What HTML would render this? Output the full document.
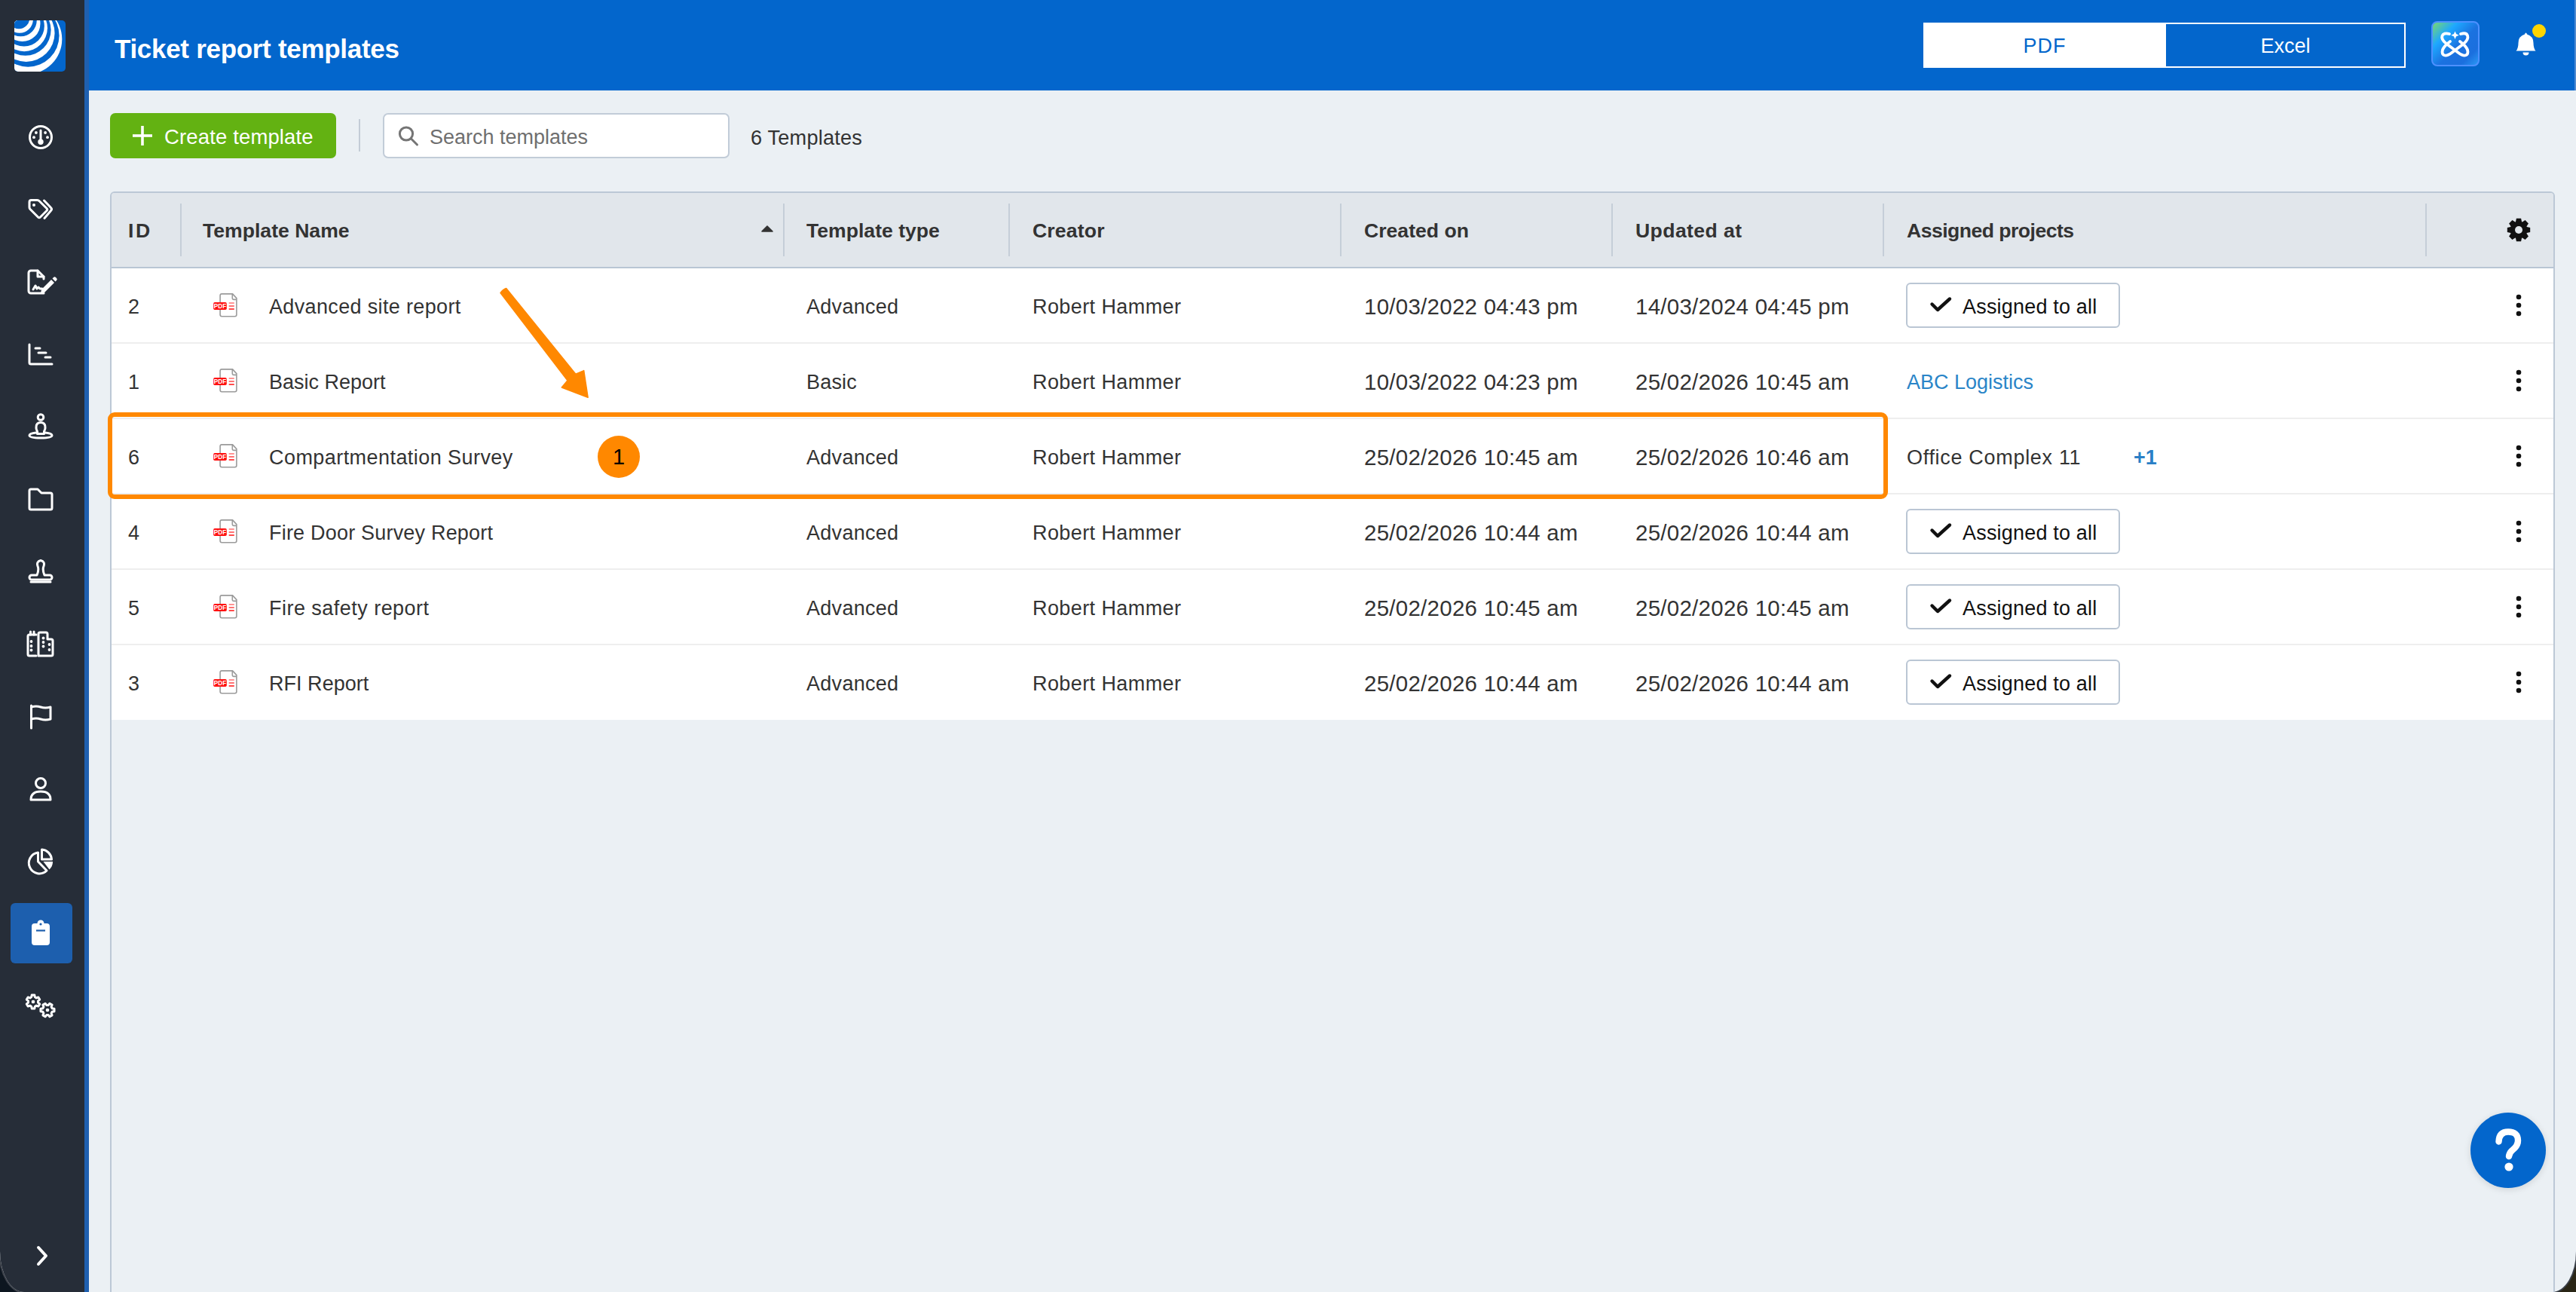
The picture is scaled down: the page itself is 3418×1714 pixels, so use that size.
<!DOCTYPE html><html><head><meta charset="utf-8"><style>
*{margin:0;padding:0;box-sizing:border-box}
html,body{width:3418px;height:1714px;overflow:hidden;background:linear-gradient(90deg,#0d1620 50%,#2a2616 50%)}
body{font-family:"Liberation Sans",sans-serif;color:#333333;position:relative}
.a{position:absolute}
.t{position:absolute;white-space:nowrap;line-height:104px;height:100px;font-size:27px}
.hd{position:absolute;white-space:nowrap;line-height:102px;height:100px;font-size:26.6px;font-weight:bold;color:#333}
svg{position:absolute;overflow:visible}
</style></head><body><div class="a" style="left:0;top:0;width:3418px;height:1714px;background:#ebf0f4;border-radius:0 0 32px 32px / 0 0 54px 54px;overflow:hidden;box-shadow:0 0 0 2px #3a3f48">
<div class="a" style="left:0;top:0;width:112px;height:1714px;background:#262d38"></div>
<div class="a" style="left:112px;top:0;width:6px;height:1714px;background:#1f60b0"></div>
<div class="a" style="left:118px;top:0;width:3300px;height:120px;background:#0366cc"></div>
<div class="a" style="left:3416px;top:0;width:2px;height:120px;background:#4f8ad0"></div>
<svg style="left:19px;top:27px" width="68" height="68" viewBox="0 0 68 68">
<defs><clipPath id="lc"><rect x="0" y="0" width="68" height="68" rx="5"/></clipPath></defs>
<g clip-path="url(#lc)">
<rect width="68" height="68" fill="#0366cc"/>
<circle cx="16.84" cy="24.99" r="46.45" fill="#fff"/>
<circle cx="18.21" cy="20.34" r="41.34" fill="#0366cc"/>
<circle cx="15.7" cy="17.08" r="37.85" fill="#fff"/>
<circle cx="14.68" cy="12.86" r="33.94" fill="#0366cc"/>
<circle cx="13.11" cy="10.29" r="30.84" fill="#fff"/>
<circle cx="12.86" cy="7.47" r="26.99" fill="#0366cc"/>
<circle cx="10.64" cy="4.26" r="23.85" fill="#fff"/>
<circle cx="8.47" cy="-0.07" r="21.33" fill="#0366cc"/>
<circle cx="7" cy="-1" r="17.83" fill="#fff"/>
<circle cx="6" cy="-3" r="14.3" fill="#0366cc"/>
</g></svg>
<svg style="left:0;top:0" width="112" height="1714">
<g fill="none" stroke="#fff" stroke-width="3" stroke-linecap="round" stroke-linejoin="round">
<circle cx="54" cy="182" r="14.5"/>
<line x1="54" y1="173" x2="54" y2="186"/>
</g>
<g fill="#fff"><circle cx="54" cy="188.2" r="3.7"/><circle cx="47.9" cy="176" r="1.9"/><circle cx="60.1" cy="176" r="1.9"/><circle cx="45" cy="182.2" r="1.9"/><circle cx="63" cy="182.2" r="1.9"/></g>
<!-- tags 278 -->
<g fill="none" stroke="#fff" stroke-width="3" stroke-linecap="round" stroke-linejoin="round">
<path d="M41.5 265.5 H49.5 Q51 265.5 52.5 267 L62 276.5 Q63.5 278 62 279.5 L53.5 288 Q52 289.5 50.5 288 L40 277.5 Q39 276.5 39 275 V268 Q39 265.5 41.5 265.5 Z"/>
<path d="M58.5 266 L67.5 275.5 Q69.5 277.5 67.5 279.5 L59 289.5"/>
</g>
<circle cx="45" cy="272" r="2" fill="#fff"/>
<!-- signature doc 374 -->
<g fill="none" stroke="#fff" stroke-width="3" stroke-linecap="round" stroke-linejoin="round">
<path d="M58 389 H41 a3 3 0 0 1 -3 -3 V362 a3 3 0 0 1 3 -3 H50 L58 367 V370"/>
<path d="M50 359 V367 H58"/>
<path d="M44 384 l3 -5 l2 4 l2 -2 l2 2 h3"/>
</g>
<path d="M55 384 L68 371 L72 375 L59 388 L54 389 Z M69.5 369.5 L71 368 a2 2 0 0 1 3 0 l1 1 a2 2 0 0 1 0 3 L73.5 373.5 Z" fill="#fff"/>
</svg>
<svg style="left:0;top:0" width="112" height="1714">
<g fill="none" stroke="#fff" stroke-width="3" stroke-linecap="round" stroke-linejoin="round">
<!-- reports 470 -->
<path d="M39 457 V481 a2 2 0 0 0 2 2 H69"/>
<line x1="47" y1="462" x2="53" y2="462"/>
<line x1="51" y1="468" x2="61" y2="468"/>
<line x1="60" y1="474" x2="67" y2="474"/>
<!-- location person 566 -->
<circle cx="54" cy="553.5" r="3.8"/>
<path d="M49.5 572.5 Q47.5 569 48 566 Q48.5 560.5 54 560.5 Q59.5 560.5 60 566 Q60.5 569 58.5 572.5 V575.5 H49.5 Z"/>
<path d="M48 574 Q39 575 39 577.5 Q39 581 54 581 Q69 581 69 577.5 Q69 575 60 574"/>
<!-- folder 662 -->
<path d="M41 649 H50 L55 654 H67 a2 2 0 0 1 2 2 V674 a2 2 0 0 1 -2 2 H41 a2 2 0 0 1 -2 -2 V651 a2 2 0 0 1 2 -2 Z"/>
<!-- stamp 758 -->
<path d="M49 763 Q52 756 50 751 Q48 745 54 743.5 Q60 745 58 751 Q56 756 59 763 H66 a3 3 0 0 1 0 6 H42 a3 3 0 0 1 0 -6 Z"/>
<line x1="41" y1="772" x2="67" y2="772"/>
<!-- buildings 854 -->
<path d="M48 870 H39 a2 2 0 0 1 -2 -2 V844 a2 2 0 0 1 2 -2 H48"/>
<line x1="40.5" y1="842" x2="40.5" y2="838"/>
<line x1="45" y1="842" x2="45" y2="838"/>
<path d="M51 870 V841 a2 2 0 0 1 2 -2 H61 a2 2 0 0 1 2 2 V848 H68 a2 2 0 0 1 2 2 V868 a2 2 0 0 1 -2 2 Z"/>
<!-- flag 950 -->
<line x1="41.5" y1="936" x2="41.5" y2="966"/>
<path d="M41.5 938 Q48 936 54 938 Q60 940 67 938 V954 Q60 956 54 954 Q48 952 41.5 954"/>
<!-- person 1047 -->
<circle cx="54" cy="1039" r="6.5"/>
<path d="M41 1061 Q41 1050 54 1050 Q67 1050 67 1061 Z"/>
<!-- pie 1142 -->
<path d="M50.5 1131 A14 14 0 1 0 62 1155 L50.5 1143 Z"/>
<path d="M55.5 1127 A14 14 0 0 1 68.5 1140 H55.5 Z"/>
<!-- gears 1334 -->
</g>
</svg>
<svg style="left:0;top:0" width="112" height="1714"><g fill="#fff">
<circle cx="41.5" cy="851" r="1.9"/><circle cx="41.5" cy="857" r="1.9"/><circle cx="41.5" cy="862.5" r="1.9"/>
<circle cx="57.5" cy="846.5" r="1.9"/><circle cx="57.5" cy="852" r="1.9"/><circle cx="57.5" cy="857.5" r="1.9"/>
<circle cx="65.5" cy="855" r="1.9"/><circle cx="65.5" cy="862" r="1.9"/>
<path d="M57.5 1143 H70 A14 14 0 0 1 65.5 1153.5 Z"/>
</g></svg>
<div class="a" style="left:14px;top:1198px;width:82px;height:80px;background:#1d5fae;border-radius:6px"></div>
<svg style="left:0;top:0" width="112" height="1714">
<path d="M42 1229 a4 4 0 0 1 4 -4 H49.5 a4.5 4.5 0 0 1 9 0 H62 a4 4 0 0 1 4 4 V1250 a4 4 0 0 1 -4 4 H46 a4 4 0 0 1 -4 -4 Z" fill="#fff"/>
<circle cx="54" cy="1226" r="1.6" fill="#1d5fae"/>
<line x1="48" y1="1234.5" x2="60" y2="1234.5" stroke="#1d5fae" stroke-width="2.2"/>
</svg>
<svg style="left:0;top:0" width="112" height="1714"><g fill="none" stroke="#fff" stroke-width="3" stroke-linecap="round" stroke-linejoin="round" stroke-width="1.85">
<path d="M41.67 1322.82 L42.17 1319.98 L45.83 1319.98 L46.32 1322.82 L48.19 1323.90 L50.89 1322.91 L52.72 1326.07 L50.51 1327.93 L50.51 1330.07 L52.72 1331.93 L50.89 1335.09 L48.19 1334.10 L46.33 1335.18 L45.83 1338.02 L42.17 1338.02 L41.68 1335.18 L39.81 1334.10 L37.11 1335.09 L35.28 1331.93 L37.49 1330.07 L37.49 1327.93 L35.28 1326.07 L37.11 1322.91 L39.81 1323.90 Z"/>
<path d="M69.18 1337.67 L72.02 1338.17 L72.02 1341.83 L69.18 1342.33 L68.10 1344.19 L69.09 1346.89 L65.93 1348.72 L64.07 1346.51 L61.93 1346.51 L60.07 1348.72 L56.91 1346.89 L57.90 1344.19 L56.82 1342.33 L53.98 1341.83 L53.98 1338.17 L56.82 1337.67 L57.90 1335.81 L56.91 1333.11 L60.07 1331.28 L61.93 1333.49 L64.07 1333.49 L65.93 1331.28 L69.09 1333.11 L68.10 1335.81 Z"/>
</g><circle cx="44" cy="1329" r="2.3" fill="#fff"/><circle cx="63" cy="1340" r="2.3" fill="#fff"/>
<path d="M51 1655 L61 1666 L51 1677" fill="none" stroke="#fff" stroke-width="4" stroke-linecap="round" stroke-linejoin="round"/>
</svg>
<div class="a" style="left:152px;top:0;height:120px;line-height:130px;font-size:35px;letter-spacing:-0.30px;font-weight:bold;color:#fff;white-space:nowrap">Ticket report templates</div>
<div class="a" style="left:2552px;top:30px;width:640px;height:60px;border:2px solid #fff;background:#0366cc"></div>
<div class="a" style="left:2552px;top:30px;width:322px;height:60px;background:#fff"></div>
<div class="a" style="left:2552px;top:30px;width:322px;height:60px;line-height:62px;text-align:center;font-size:27px;letter-spacing:1px;color:#0366cc">PDF</div>
<div class="a" style="left:2874px;top:30px;width:317px;height:60px;line-height:62px;text-align:center;font-size:27px;color:#fff">Excel</div>
<div class="a" style="left:3226px;top:28px;width:64px;height:60px;border-radius:8px;border:2px solid #4e90ff;background:linear-gradient(135deg,#7ad86f 0%,#1ea8ff 28%,#1b72e0 55%,#1b6fde 80%,#2a98f5 100%)"></div>
<svg style="left:3226px;top:28px" width="64" height="60">
<g fill="none" stroke="#fff" stroke-width="3.8" stroke-linecap="round">
<path d="M24 17 C 14 14, 10 22, 20 30 L 36 42 C 44 48, 50 46, 48 38 C 46 33, 42 30, 38 27"/>
<path d="M39 17 C 49 14, 52 22, 43 30 L 27 42 C 19 48, 13 46, 15 38 C 17 33, 21 30, 25 27"/>
</g>
<path d="M31.5 13.5 l1.6 3.6 l3.6 1.6 l-3.6 1.6 l-1.6 3.6 l-1.6 -3.6 l-3.6 -1.6 l3.6 -1.6 Z" fill="#fff"/>
</svg>
<svg style="left:3330px;top:38px" width="50" height="40">
<path d="M8.5 29.5 Q11.5 26 11.5 19 Q11.5 10 20 7.5 Q20.5 5.5 21.5 5.5 Q22.5 5.5 23 7.5 Q31.5 10 31.5 19 Q31.5 26 34.5 29.5 Z" fill="#fff"/>
<path d="M17.5 31.5 Q17.5 35.5 21.5 35.5 Q25.5 35.5 25.5 31.5 Z" fill="#fff"/>
<circle cx="39" cy="3" r="9" fill="#ffd500"/>
</svg>
<div class="a" style="left:146px;top:150px;width:300px;height:60px;background:#63b212;border-radius:7px"></div>
<svg style="left:146px;top:150px" width="300" height="60"><g stroke="#fff" stroke-width="3.6"><line x1="30" y1="30" x2="56" y2="30"/><line x1="43" y1="17" x2="43" y2="43"/></g></svg>
<div class="a" style="left:218px;top:150px;height:60px;line-height:64px;font-size:27.5px;letter-spacing:0.14px;color:#fff;white-space:nowrap">Create template</div>
<div class="a" style="left:476px;top:158px;width:2px;height:43px;background:#c3ccd6"></div>
<div class="a" style="left:508px;top:150px;width:460px;height:60px;background:#fff;border:2px solid #c2ccd8;border-radius:7px"></div>
<svg style="left:508px;top:150px" width="80" height="59"><g fill="none" stroke="#757575" stroke-width="3" stroke-linecap="round"><circle cx="31" cy="27.5" r="8.6"/><line x1="37.5" y1="34" x2="45.5" y2="42"/></g></svg>
<div class="a" style="left:570px;top:150px;height:60px;line-height:64px;font-size:27px;color:#6f6f6f;white-space:nowrap">Search templates</div>
<div class="a" style="left:996px;top:150px;height:60px;line-height:65px;font-size:27.2px;letter-spacing:0.17px;color:#333;white-space:nowrap">6 Templates</div>
<div class="a" style="left:146px;top:254px;width:3244px;height:1600px;border:2px solid #bcc8d6;border-radius:6px 6px 0 0;background:#ebf0f4"></div>
<div class="a" style="left:148px;top:256px;width:3240px;height:99px;background:#e1e6eb;border-radius:4px 4px 0 0"></div>
<div class="a" style="left:148px;top:354px;width:3240px;height:2px;background:#b9c6d4"></div>
<div class="a" style="left:239px;top:270px;width:2px;height:70px;background:#c5ced8"></div>
<div class="a" style="left:1039px;top:270px;width:2px;height:70px;background:#c5ced8"></div>
<div class="a" style="left:1338px;top:270px;width:2px;height:70px;background:#c5ced8"></div>
<div class="a" style="left:1778px;top:270px;width:2px;height:70px;background:#c5ced8"></div>
<div class="a" style="left:2138px;top:270px;width:2px;height:70px;background:#c5ced8"></div>
<div class="a" style="left:2498px;top:270px;width:2px;height:70px;background:#c5ced8"></div>
<div class="a" style="left:3218px;top:270px;width:2px;height:70px;background:#c5ced8"></div>
<div class="hd" style="left:170px;top:255px;letter-spacing:2.5px">ID</div>
<div class="hd" style="left:269px;top:255px;">Template Name</div>
<div class="hd" style="left:1070px;top:255px;">Template type</div>
<div class="hd" style="left:1370px;top:255px;letter-spacing:0.15px">Creator</div>
<div class="hd" style="left:1810px;top:255px;">Created on</div>
<div class="hd" style="left:2170px;top:255px;letter-spacing:0.4px">Updated at</div>
<div class="hd" style="left:2530px;top:255px;letter-spacing:-0.53px">Assigned projects</div>
<svg style="left:1008px;top:298px" width="20" height="12"><path d="M3 9 L10 2 L17 9 Z" fill="#333" stroke="#333" stroke-width="1.6" stroke-linejoin="round"/></svg>
<svg style="left:3326px;top:289px" width="32" height="32"><path d="M26.76 11.95 L31.19 12.92 L31.19 19.08 L26.76 20.05 L26.48 20.75 L28.92 24.56 L24.56 28.92 L20.75 26.48 L20.05 26.76 L19.08 31.19 L12.92 31.19 L11.95 26.76 L11.25 26.48 L7.44 28.92 L3.08 24.56 L5.52 20.75 L5.24 20.05 L0.81 19.08 L0.81 12.92 L5.24 11.95 L5.52 11.25 L3.08 7.44 L7.44 3.08 L11.25 5.52 L11.95 5.24 L12.92 0.81 L19.08 0.81 L20.05 5.24 L20.75 5.52 L24.56 3.08 L28.92 7.44 L26.48 11.25 Z" fill="#111"/><circle cx="16" cy="16" r="5" fill="#e1e6eb"/></svg>
<div class="a" style="left:148px;top:356px;width:3240px;height:99px;background:#fff"></div>
<div class="a" style="left:148px;top:454px;width:3240px;height:2px;background:#eeeeee"></div>
<div class="t" style="left:170px;top:355px">2</div>
<svg style="left:280px;top:387px" width="40" height="36">
<path d="M14.3 2.9 H28.6 L33.9 8.6 V30.6 a2.2 2.2 0 0 1 -2.2 2.2 H14.3 a2.2 2.2 0 0 1 -2.2 -2.2 V5.1 a2.2 2.2 0 0 1 2.2 -2.2 Z" fill="#fff" stroke="#9b9b9b" stroke-width="1.6"/>
<path d="M28.3 3 V8.6 a1.8 1.8 0 0 0 1.8 1.8 H33.9" fill="none" stroke="#9b9b9b" stroke-width="1.6"/>
<rect x="3.2" y="14.1" width="17.6" height="9.9" rx="1.8" fill="#ff1010"/>
<text x="12" y="22.2" font-family="Liberation Sans" font-weight="bold" font-size="8.2" fill="#fff" text-anchor="middle">PDF</text>
<g stroke-width="1.5"><line x1="23.7" y1="15" x2="30.8" y2="15" stroke="#ff7070"/><line x1="23.7" y1="19" x2="30.8" y2="19" stroke="#ff4545"/><line x1="23.7" y1="23" x2="30.8" y2="23" stroke="#ff1010"/></g>
</svg>
<div class="t" style="left:357px;top:355px;letter-spacing:0.35px">Advanced site report</div>
<div class="t" style="left:1070px;top:355px;letter-spacing:0.29px">Advanced</div>
<div class="t" style="left:1370px;top:355px;letter-spacing:0.41px">Robert Hammer</div>
<div class="t" style="left:1810px;top:355px;font-size:29.5px;letter-spacing:0.26px">10/03/2022 04:43 pm</div>
<div class="t" style="left:2170px;top:355px;font-size:29.5px;letter-spacing:0.26px">14/03/2024 04:45 pm</div>
<div class="a" style="left:2529px;top:375px;width:284px;height:60px;border:2px solid #bac6d4;border-radius:6px;background:#fff"></div>
<svg style="left:2558px;top:393px" width="34" height="24"><path d="M5.5 10.5 L13 18 L29 3.5" fill="none" stroke="#111" stroke-width="4.4" stroke-linecap="round" stroke-linejoin="round"/></svg>
<div class="t" style="left:2604px;top:355px;color:#111;letter-spacing:0.19px">Assigned to all</div>
<svg style="left:3336px;top:390px" width="12" height="30"><g fill="#111"><circle cx="6" cy="4" r="3.3"/><circle cx="6" cy="15" r="3.3"/><circle cx="6" cy="26" r="3.3"/></g></svg>
<div class="a" style="left:148px;top:456px;width:3240px;height:99px;background:#fff"></div>
<div class="a" style="left:148px;top:554px;width:3240px;height:2px;background:#eeeeee"></div>
<div class="t" style="left:170px;top:455px">1</div>
<svg style="left:280px;top:487px" width="40" height="36">
<path d="M14.3 2.9 H28.6 L33.9 8.6 V30.6 a2.2 2.2 0 0 1 -2.2 2.2 H14.3 a2.2 2.2 0 0 1 -2.2 -2.2 V5.1 a2.2 2.2 0 0 1 2.2 -2.2 Z" fill="#fff" stroke="#9b9b9b" stroke-width="1.6"/>
<path d="M28.3 3 V8.6 a1.8 1.8 0 0 0 1.8 1.8 H33.9" fill="none" stroke="#9b9b9b" stroke-width="1.6"/>
<rect x="3.2" y="14.1" width="17.6" height="9.9" rx="1.8" fill="#ff1010"/>
<text x="12" y="22.2" font-family="Liberation Sans" font-weight="bold" font-size="8.2" fill="#fff" text-anchor="middle">PDF</text>
<g stroke-width="1.5"><line x1="23.7" y1="15" x2="30.8" y2="15" stroke="#ff7070"/><line x1="23.7" y1="19" x2="30.8" y2="19" stroke="#ff4545"/><line x1="23.7" y1="23" x2="30.8" y2="23" stroke="#ff1010"/></g>
</svg>
<div class="t" style="left:357px;top:455px;letter-spacing:0px">Basic Report</div>
<div class="t" style="left:1070px;top:455px;letter-spacing:0.2px">Basic</div>
<div class="t" style="left:1370px;top:455px;letter-spacing:0.41px">Robert Hammer</div>
<div class="t" style="left:1810px;top:455px;font-size:29.5px;letter-spacing:0.26px">10/03/2022 04:23 pm</div>
<div class="t" style="left:2170px;top:455px;font-size:29.5px;letter-spacing:0.26px">25/02/2026 10:45 am</div>
<div class="t" style="left:2530px;top:455px;color:#2a85c8">ABC Logistics</div>
<svg style="left:3336px;top:490px" width="12" height="30"><g fill="#111"><circle cx="6" cy="4" r="3.3"/><circle cx="6" cy="15" r="3.3"/><circle cx="6" cy="26" r="3.3"/></g></svg>
<div class="a" style="left:148px;top:556px;width:3240px;height:99px;background:#fff"></div>
<div class="a" style="left:148px;top:654px;width:3240px;height:2px;background:#eeeeee"></div>
<div class="t" style="left:170px;top:555px">6</div>
<svg style="left:280px;top:587px" width="40" height="36">
<path d="M14.3 2.9 H28.6 L33.9 8.6 V30.6 a2.2 2.2 0 0 1 -2.2 2.2 H14.3 a2.2 2.2 0 0 1 -2.2 -2.2 V5.1 a2.2 2.2 0 0 1 2.2 -2.2 Z" fill="#fff" stroke="#9b9b9b" stroke-width="1.6"/>
<path d="M28.3 3 V8.6 a1.8 1.8 0 0 0 1.8 1.8 H33.9" fill="none" stroke="#9b9b9b" stroke-width="1.6"/>
<rect x="3.2" y="14.1" width="17.6" height="9.9" rx="1.8" fill="#ff1010"/>
<text x="12" y="22.2" font-family="Liberation Sans" font-weight="bold" font-size="8.2" fill="#fff" text-anchor="middle">PDF</text>
<g stroke-width="1.5"><line x1="23.7" y1="15" x2="30.8" y2="15" stroke="#ff7070"/><line x1="23.7" y1="19" x2="30.8" y2="19" stroke="#ff4545"/><line x1="23.7" y1="23" x2="30.8" y2="23" stroke="#ff1010"/></g>
</svg>
<div class="t" style="left:357px;top:555px;letter-spacing:0.44px">Compartmentation Survey</div>
<div class="t" style="left:1070px;top:555px;letter-spacing:0.29px">Advanced</div>
<div class="t" style="left:1370px;top:555px;letter-spacing:0.41px">Robert Hammer</div>
<div class="t" style="left:1810px;top:555px;font-size:29.5px;letter-spacing:0.26px">25/02/2026 10:45 am</div>
<div class="t" style="left:2170px;top:555px;font-size:29.5px;letter-spacing:0.26px">25/02/2026 10:46 am</div>
<div class="t" style="left:2530px;top:555px;letter-spacing:0.69px">Office Complex 11</div>
<div class="t" style="left:2831px;top:555px;color:#2a7fc6;font-weight:bold;font-size:27px">+1</div>
<svg style="left:3336px;top:590px" width="12" height="30"><g fill="#111"><circle cx="6" cy="4" r="3.3"/><circle cx="6" cy="15" r="3.3"/><circle cx="6" cy="26" r="3.3"/></g></svg>
<div class="a" style="left:148px;top:656px;width:3240px;height:99px;background:#fff"></div>
<div class="a" style="left:148px;top:754px;width:3240px;height:2px;background:#eeeeee"></div>
<div class="t" style="left:170px;top:655px">4</div>
<svg style="left:280px;top:687px" width="40" height="36">
<path d="M14.3 2.9 H28.6 L33.9 8.6 V30.6 a2.2 2.2 0 0 1 -2.2 2.2 H14.3 a2.2 2.2 0 0 1 -2.2 -2.2 V5.1 a2.2 2.2 0 0 1 2.2 -2.2 Z" fill="#fff" stroke="#9b9b9b" stroke-width="1.6"/>
<path d="M28.3 3 V8.6 a1.8 1.8 0 0 0 1.8 1.8 H33.9" fill="none" stroke="#9b9b9b" stroke-width="1.6"/>
<rect x="3.2" y="14.1" width="17.6" height="9.9" rx="1.8" fill="#ff1010"/>
<text x="12" y="22.2" font-family="Liberation Sans" font-weight="bold" font-size="8.2" fill="#fff" text-anchor="middle">PDF</text>
<g stroke-width="1.5"><line x1="23.7" y1="15" x2="30.8" y2="15" stroke="#ff7070"/><line x1="23.7" y1="19" x2="30.8" y2="19" stroke="#ff4545"/><line x1="23.7" y1="23" x2="30.8" y2="23" stroke="#ff1010"/></g>
</svg>
<div class="t" style="left:357px;top:655px;letter-spacing:0.2px">Fire Door Survey Report</div>
<div class="t" style="left:1070px;top:655px;letter-spacing:0.29px">Advanced</div>
<div class="t" style="left:1370px;top:655px;letter-spacing:0.41px">Robert Hammer</div>
<div class="t" style="left:1810px;top:655px;font-size:29.5px;letter-spacing:0.26px">25/02/2026 10:44 am</div>
<div class="t" style="left:2170px;top:655px;font-size:29.5px;letter-spacing:0.26px">25/02/2026 10:44 am</div>
<div class="a" style="left:2529px;top:675px;width:284px;height:60px;border:2px solid #bac6d4;border-radius:6px;background:#fff"></div>
<svg style="left:2558px;top:693px" width="34" height="24"><path d="M5.5 10.5 L13 18 L29 3.5" fill="none" stroke="#111" stroke-width="4.4" stroke-linecap="round" stroke-linejoin="round"/></svg>
<div class="t" style="left:2604px;top:655px;color:#111;letter-spacing:0.19px">Assigned to all</div>
<svg style="left:3336px;top:690px" width="12" height="30"><g fill="#111"><circle cx="6" cy="4" r="3.3"/><circle cx="6" cy="15" r="3.3"/><circle cx="6" cy="26" r="3.3"/></g></svg>
<div class="a" style="left:148px;top:756px;width:3240px;height:99px;background:#fff"></div>
<div class="a" style="left:148px;top:854px;width:3240px;height:2px;background:#eeeeee"></div>
<div class="t" style="left:170px;top:755px">5</div>
<svg style="left:280px;top:787px" width="40" height="36">
<path d="M14.3 2.9 H28.6 L33.9 8.6 V30.6 a2.2 2.2 0 0 1 -2.2 2.2 H14.3 a2.2 2.2 0 0 1 -2.2 -2.2 V5.1 a2.2 2.2 0 0 1 2.2 -2.2 Z" fill="#fff" stroke="#9b9b9b" stroke-width="1.6"/>
<path d="M28.3 3 V8.6 a1.8 1.8 0 0 0 1.8 1.8 H33.9" fill="none" stroke="#9b9b9b" stroke-width="1.6"/>
<rect x="3.2" y="14.1" width="17.6" height="9.9" rx="1.8" fill="#ff1010"/>
<text x="12" y="22.2" font-family="Liberation Sans" font-weight="bold" font-size="8.2" fill="#fff" text-anchor="middle">PDF</text>
<g stroke-width="1.5"><line x1="23.7" y1="15" x2="30.8" y2="15" stroke="#ff7070"/><line x1="23.7" y1="19" x2="30.8" y2="19" stroke="#ff4545"/><line x1="23.7" y1="23" x2="30.8" y2="23" stroke="#ff1010"/></g>
</svg>
<div class="t" style="left:357px;top:755px;letter-spacing:0.47px">Fire safety report</div>
<div class="t" style="left:1070px;top:755px;letter-spacing:0.29px">Advanced</div>
<div class="t" style="left:1370px;top:755px;letter-spacing:0.41px">Robert Hammer</div>
<div class="t" style="left:1810px;top:755px;font-size:29.5px;letter-spacing:0.26px">25/02/2026 10:45 am</div>
<div class="t" style="left:2170px;top:755px;font-size:29.5px;letter-spacing:0.26px">25/02/2026 10:45 am</div>
<div class="a" style="left:2529px;top:775px;width:284px;height:60px;border:2px solid #bac6d4;border-radius:6px;background:#fff"></div>
<svg style="left:2558px;top:793px" width="34" height="24"><path d="M5.5 10.5 L13 18 L29 3.5" fill="none" stroke="#111" stroke-width="4.4" stroke-linecap="round" stroke-linejoin="round"/></svg>
<div class="t" style="left:2604px;top:755px;color:#111;letter-spacing:0.19px">Assigned to all</div>
<svg style="left:3336px;top:790px" width="12" height="30"><g fill="#111"><circle cx="6" cy="4" r="3.3"/><circle cx="6" cy="15" r="3.3"/><circle cx="6" cy="26" r="3.3"/></g></svg>
<div class="a" style="left:148px;top:856px;width:3240px;height:99px;background:#fff"></div>
<div class="t" style="left:170px;top:855px">3</div>
<svg style="left:280px;top:887px" width="40" height="36">
<path d="M14.3 2.9 H28.6 L33.9 8.6 V30.6 a2.2 2.2 0 0 1 -2.2 2.2 H14.3 a2.2 2.2 0 0 1 -2.2 -2.2 V5.1 a2.2 2.2 0 0 1 2.2 -2.2 Z" fill="#fff" stroke="#9b9b9b" stroke-width="1.6"/>
<path d="M28.3 3 V8.6 a1.8 1.8 0 0 0 1.8 1.8 H33.9" fill="none" stroke="#9b9b9b" stroke-width="1.6"/>
<rect x="3.2" y="14.1" width="17.6" height="9.9" rx="1.8" fill="#ff1010"/>
<text x="12" y="22.2" font-family="Liberation Sans" font-weight="bold" font-size="8.2" fill="#fff" text-anchor="middle">PDF</text>
<g stroke-width="1.5"><line x1="23.7" y1="15" x2="30.8" y2="15" stroke="#ff7070"/><line x1="23.7" y1="19" x2="30.8" y2="19" stroke="#ff4545"/><line x1="23.7" y1="23" x2="30.8" y2="23" stroke="#ff1010"/></g>
</svg>
<div class="t" style="left:357px;top:855px;letter-spacing:0.03px">RFI Report</div>
<div class="t" style="left:1070px;top:855px;letter-spacing:0.29px">Advanced</div>
<div class="t" style="left:1370px;top:855px;letter-spacing:0.41px">Robert Hammer</div>
<div class="t" style="left:1810px;top:855px;font-size:29.5px;letter-spacing:0.26px">25/02/2026 10:44 am</div>
<div class="t" style="left:2170px;top:855px;font-size:29.5px;letter-spacing:0.26px">25/02/2026 10:44 am</div>
<div class="a" style="left:2529px;top:875px;width:284px;height:60px;border:2px solid #bac6d4;border-radius:6px;background:#fff"></div>
<svg style="left:2558px;top:893px" width="34" height="24"><path d="M5.5 10.5 L13 18 L29 3.5" fill="none" stroke="#111" stroke-width="4.4" stroke-linecap="round" stroke-linejoin="round"/></svg>
<div class="t" style="left:2604px;top:855px;color:#111;letter-spacing:0.19px">Assigned to all</div>
<svg style="left:3336px;top:890px" width="12" height="30"><g fill="#111"><circle cx="6" cy="4" r="3.3"/><circle cx="6" cy="15" r="3.3"/><circle cx="6" cy="26" r="3.3"/></g></svg>
<div class="a" style="left:143px;top:547px;width:2362px;height:115px;border:6px solid #ff8800;border-radius:9px"></div>
<div class="a" style="left:793px;top:578px;width:56px;height:56px;border-radius:50%;background:#ff8800;color:#000;font-size:29px;line-height:56px;text-align:center">1</div>
<svg style="left:0;top:0" width="1000" height="700"><path d="M671.7 382.5 Q667 384 664 388.6 L753 504.8 L745.3 514 L780.1 527.2 L774.7 491.6 L763.9 496.3 Z" fill="#ff8800" stroke="#ff8800" stroke-width="1.5" stroke-linejoin="round"/></svg>
<div class="a" style="left:3278px;top:1476px;width:100px;height:100px;border-radius:50%;background:#0366cc;box-shadow:0 2px 10px rgba(0,0,0,0.12)"></div>
<svg style="left:3278px;top:1476px" width="100" height="100"><path d="M37.5 38.5 Q38 25.5 50 25.5 Q63 25.5 63 37 Q63 44 56 49.5 Q51.5 53 51 58" fill="none" stroke="#fff" stroke-width="8.4" stroke-linecap="round"/><circle cx="51" cy="72" r="5.6" fill="#fff"/></svg>
</div></body></html>
